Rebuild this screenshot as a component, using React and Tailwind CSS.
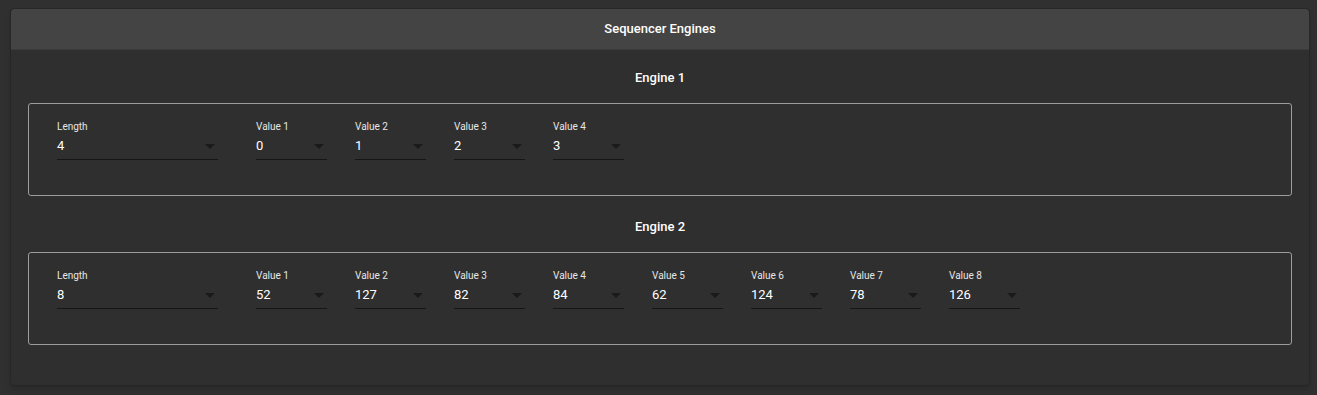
import React from "react";

const engines = [
  { name: "Engine 1", length: 4, values: [0, 1, 2, 3] },
  { name: "Engine 2", length: 8, values: [52, 127, 82, 84, 62, 124, 78, 126] },
];

function Field({ label, value, wide }) {
  return (
    <div className={wide ? "w-[161px] mr-[38px]" : "w-[71px] mr-[28px]"}>
      <div className="text-[10px] leading-[12px] text-[#e6e6e6]">{label}</div>
      <div className="mt-[4px] h-[23px] pb-[4px] flex items-center justify-between border-b border-[#161616]">
        <span className="text-[13px] text-white">{value}</span>
        <svg width="10" height="5" viewBox="0 0 10 5" className="mr-[3px]">
          <path d="M0 0 L10 0 L5 5 Z" fill="#1a1a1a" />
        </svg>
      </div>
    </div>
  );
}

function Engine({ engine, first }) {
  return (
    <div className={first ? "" : "mt-[22px]"}>
      <div className="h-[18px] flex items-center justify-center text-[13px] font-medium text-white">
        {engine.name}
      </div>
      <div className="mt-[16px] h-[93px] border border-[#9c9c9c] rounded-[3px] pl-[28px] pt-[17px] flex items-start">
        <Field label="Length" value={engine.length} wide />
        {engine.values.map((v, i) => (
          <Field key={i} label={`Value ${i + 1}`} value={v} />
        ))}
      </div>
    </div>
  );
}

export default function App() {
  return (
    <div
      className="h-[395px] bg-[#303030] pt-[8px] pl-[10px] pr-[7px]"
      style={{ fontFamily: "Roboto, 'Liberation Sans', sans-serif" }}
    >
      <div className="bg-[#2f2f2f] border border-[#272727] rounded-[4px] shadow-md">
        <div className="h-[41px] bg-[#444444] border-b border-[#3b3b3b] rounded-t-[4px] flex items-center justify-center text-[13px] font-medium text-white">
          Sequencer Engines
        </div>
        <div className="px-[17px] pt-[19px] pb-[40px]">
          {engines.map((e, i) => (
            <Engine key={i} engine={e} first={i === 0} />
          ))}
        </div>
      </div>
    </div>
  );
}
